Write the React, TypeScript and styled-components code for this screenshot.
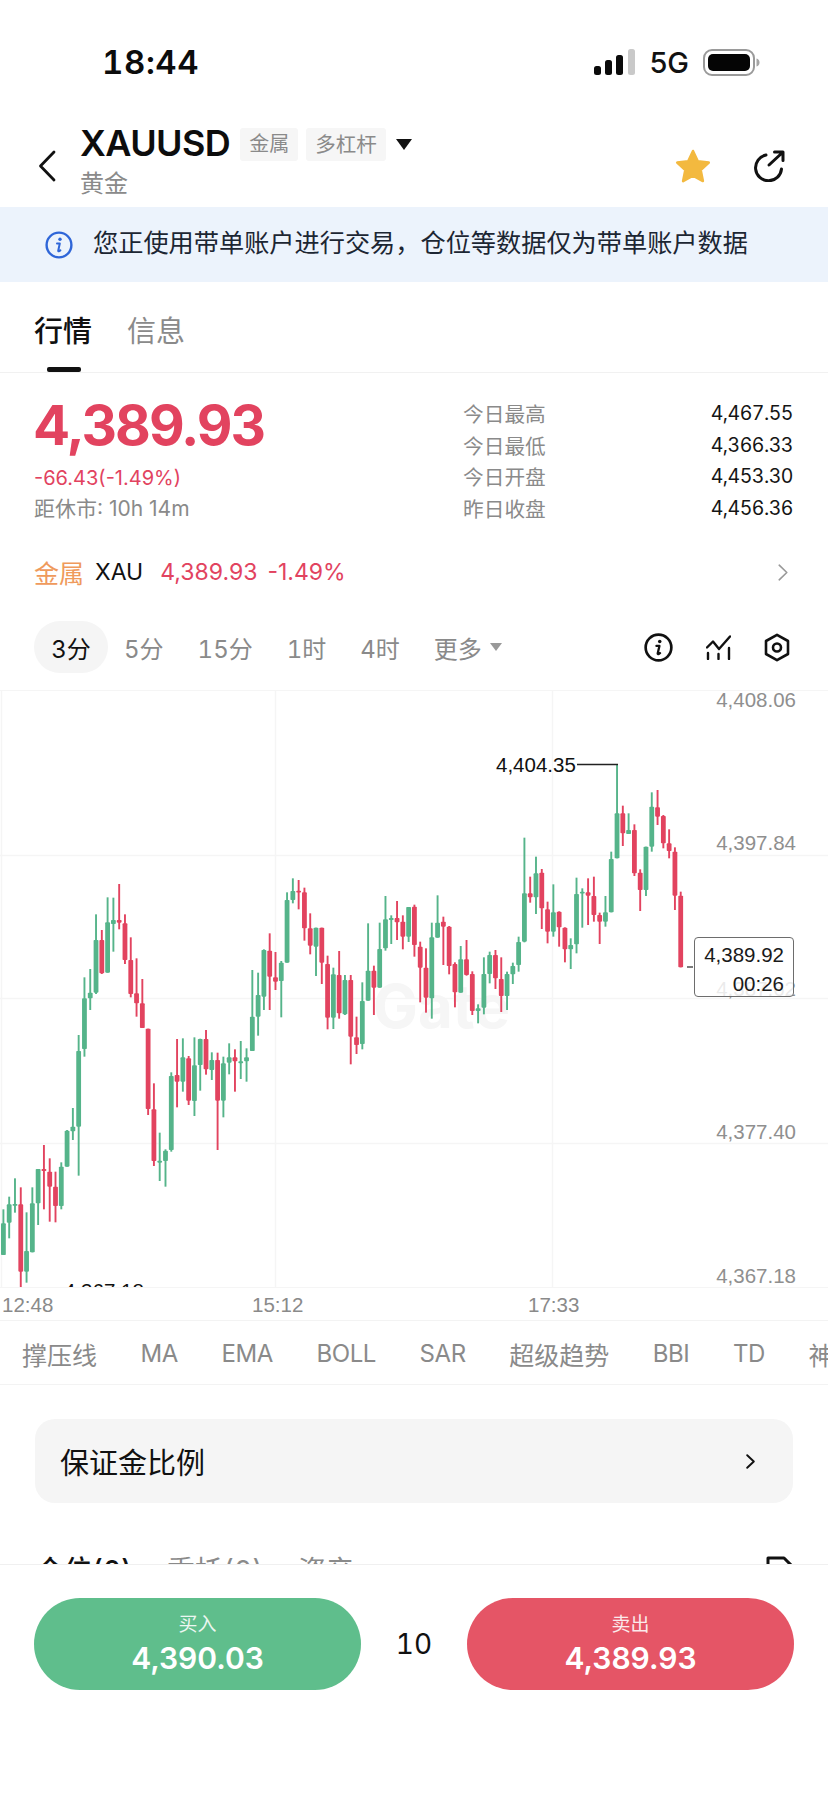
import React from "react";
import styled, { createGlobalStyle } from "styled-components";

const SANS = `Inter, "Noto Sans CJK SC", "Noto Sans", sans-serif`;
const CHART_FONT = `"Liberation Sans", "Noto Sans CJK SC", sans-serif`;
const RED = "#e2435f";
const GREEN = "#55b48a";
const GREY = "#8a8a8a";

const Global = createGlobalStyle`
  html, body { margin: 0; padding: 0; background: #fff; }
  body { font-family: ${SANS}; color: #111; }
  * { box-sizing: border-box; }
`;

/* ---------- candle data: [up?, wickTop, bodyTop, bodyBottom, wickBottom], crop px (3x) ---------- */
type Raw = [number, number, number, number, number];
const sectionA: Raw[] = [
  [1,1018,1060,1155,1155],[1,980,1003,1058,1105],[1,925,1002,1005,1028],[0,952,1003,1205,1255],[1,1027,1143,1205,1238],
  [1,952,1000,1147,1147],[1,897,897,1000,1065],[0,825,897,903,1018],[0,865,905,950,1055],[0,905,950,1008,1057],
  [1,877,890,1008,1018],[1,780,782,890,890],[1,714,770,784,810],[1,495,543,770,917],[1,322,385,537,560],
  [1,297,368,385,420],[1,133,210,368,372],[0,180,210,310,312],[1,82,157,308,308],[1,83,150,162,245],
  [0,42,150,158,178],[0,133,160,270,282],[0,202,270,372,382],[0,265,370,400,440],[0,327,400,474,474],
  [0,476,476,717,735],[0,640,718,873,888],[1,788,872,878,933],[1,838,842,873,950],[1,607,618,840,845],[0,507,615,635,712],
];
const sectionB: Raw[] = [
  [1,535,592,665,695],[0,588,595,722,735],[1,532,616,723,768],[1,536,537,615,692],[0,510,537,628,644],
  [1,577,600,630,660],[0,578,600,722,870],[1,590,610,722,772],[1,550,592,608,643],[0,568,592,604,695],
  [1,543,604,610,657],[1,565,592,604,665],[1,330,470,573,573],[1,338,405,470,527],[1,268,270,410,450],
  [0,220,272,350,450],[0,276,352,365,390],[1,303,308,363,472],[1,97,120,308,308],[1,55,93,120,130],
  [0,60,92,96,148],[0,83,97,205,242],[0,160,205,257,283],[1,203,203,260,348],[0,203,203,308,372],
  [0,287,312,473,508],[1,323,343,473,507],[0,273,345,460,476],[1,345,360,463,465],[0,345,360,530,613],[0,470,532,555,582],
];
const sectionC: Raw[] = [
  [1,427,483,612,628],[1,250,392,482,482],[0,377,392,443,525],[1,248,327,443,443],[1,168,238,325,332],
  [1,226,234,240,312],[0,183,234,247,300],[0,226,245,290,328],[1,201,201,290,306],[0,194,200,315,350],
  [0,305,320,383,487],[0,325,383,473,518],[1,248,292,475,536],[1,166,248,293,293],[0,230,245,260,375],
  [0,258,260,378,403],[0,367,372,457,502],[1,318,358,458,458],[0,300,358,405,407],[0,394,402,513,525],
  [1,493,505,513,550],[1,352,402,503,523],[1,335,345,402,430],[0,330,345,415,447],[0,352,417,468,516],
  [1,395,402,468,510],[1,368,378,403,432],[1,290,306,375,395],[1,-7,160,305,307],[0,110,160,172,188],[1,50,100,172,222],
];
const sectionD: Raw[] = [
  [0,357,368,475,537],[0,455,478,545,580],[1,403,487,545,560],[0,484,485,532,590],[0,532,533,598,637],
  [1,565,585,598,657],[1,383,432,583,610],[1,415,425,430,533],[0,385,427,437,525],[0,380,438,495,515],
  [0,488,495,515,582],[1,438,487,515,530],[1,305,327,487,487],[1,43,190,325,325],[0,167,190,250,288],
  [1,190,240,252,252],[0,223,240,370,378],[0,358,368,420,483],[1,290,290,420,438],[1,127,170,290,305],
  [0,120,172,200,225],[0,195,198,280,295],[0,238,280,303,325],[0,292,305,437,480],[0,425,437,652,652],
];
const CHART_TOP = 690;
const CHART_H = 597;
const toChart = (rows: Raw[], originY: number) =>
  rows.map(([u, a, b, c, d]) => ({
    up: !!u,
    wt: originY + a / 3 - CHART_TOP,
    bt: originY + b / 3 - CHART_TOP,
    bb: originY + c / 3 - CHART_TOP,
    wb: originY + d / 3 - CHART_TOP,
  }));
const candles = [
  ...toChart(sectionA, 870),
  ...toChart(sectionB, 860),
  ...toChart(sectionC, 840),
  ...toChart(sectionD, 750),
];

/* ---------- layout ---------- */
const Page = styled.div`
  width: 828px;
  height: 1796px;
  overflow: hidden;
  display: flex;
  flex-direction: column;
  background: #fff;
`;
const StatusBar = styled.div`
  height: 124px;
  flex: none;
  display: flex;
  align-items: center;
  justify-content: space-between;
  padding: 0 68px 0 102px;
`;
const Time = styled.div`
  font-size: 33px;
  font-weight: 600;
  letter-spacing: 0.6px;
  font-variant-numeric: tabular-nums;
  color: #0c0c0c;
`;
const StatusRight = styled.div`
  display: flex;
  align-items: center;
  gap: 14px;
`;
const FiveG = styled.div`
  font-size: 29px;
  font-weight: 500;
  color: #111;
`;
const Header = styled.div`
  height: 83px;
  flex: none;
  display: flex;
  align-items: flex-start;
  padding: 0 43px 0 38px;
`;
const BackBtn = styled.div`
  width: 42px;
  flex: none;
  margin-top: 26px;
  display: flex;
`;
const TitleBlock = styled.div`
  flex: 1;
  display: flex;
  flex-direction: column;
`;
const TitleRow = styled.div`
  display: flex;
  align-items: center;
  height: 33px;
  margin-top: 4px;
`;
const Symbol = styled.div`
  font-size: 36px;
  font-weight: 600;
  letter-spacing: -0.6px;
  color: #0d0d0d;
  margin: -2px 10px 0 0;
  line-height: 33px;
`;
const Tag = styled.div`
  height: 33px;
  line-height: 33px;
  padding: 0 9px;
  font-size: 20px;
  color: ${GREY};
  background: #f6f6f6;
  border-radius: 3px;
  margin-right: 8px;
`;
const TagWide = styled(Tag)`
  font-size: 20.5px;
`;
const Caret = styled.div`
  margin-left: 2px;
  width: 0;
  height: 0;
  border-left: 8px solid transparent;
  border-right: 8px solid transparent;
  border-top: 11px solid #111;
`;
const Subtitle = styled.div`
  font-size: 24px;
  line-height: 30px;
  margin-top: 8px;
  color: ${GREY};
`;
const HeaderIcons = styled.div`
  display: flex;
  align-items: center;
  gap: 41px;
  margin-top: 24px;
`;
const Banner = styled.div`
  height: 75px;
  flex: none;
  background: #ecf3fc;
  display: flex;
  align-items: center;
  gap: 20px;
  padding-left: 45px;
  font-size: 25.2px;
  color: #1c2633;
`;
const BannerText = styled.span`
  margin-bottom: 7px;
`;
const Tabs = styled.div`
  height: 91px;
  flex: none;
  display: flex;
  gap: 35px;
  padding: 30px 0 0 34px;
  border-bottom: 1px solid #f1f1f1;
`;
const Tab = styled.div<{ $active?: boolean }>`
  position: relative;
  font-size: 29px;
  line-height: 40px;
  font-weight: ${(p) => (p.$active ? 500 : 400)};
  color: ${(p) => (p.$active ? "#111" : GREY)};
  ${(p) =>
    p.$active
      ? `&::after { content: ""; position: absolute; left: 13px; top: 55px; width: 34px; height: 5px; border-radius: 2px; background: #111; }`
      : ""}
`;
const Quote = styled.div`
  height: 150px;
  flex: none;
  display: flex;
  justify-content: space-between;
  padding: 0 35px 0 33px;
`;
const QuoteLeft = styled.div`
  display: flex;
  flex-direction: column;
`;
const BigPrice = styled.div`
  font-size: 55px;
  font-weight: 700;
  line-height: 60px;
  margin-top: 22px;
  letter-spacing: -1.95px;
  color: ${RED};
`;
const Change = styled.div`
  font-size: 20px;
  line-height: 26px;
  margin: 10px 0 0 1px;
  color: ${RED};
`;
const Closing = styled.div`
  font-size: 21px;
  line-height: 26px;
  margin: 5px 0 0 1px;
  color: ${GREY};
`;
const Stats = styled.div`
  width: 330px;
  padding-top: 24px;
  display: grid;
  grid-template-columns: 1fr auto;
  grid-auto-rows: 31.7px;
  align-items: center;
`;
const StatLabel = styled.div`
  font-size: 20.7px;
  color: ${GREY};
`;
const StatValue = styled.div`
  font-size: 19.5px;
  letter-spacing: -0.5px;
  font-variant-numeric: tabular-nums;
  color: #151515;
  text-align: right;
`;
const MetalRow = styled.div`
  height: 60px;
  margin-top: 19px;
  flex: none;
  display: flex;
  align-items: center;
  padding: 0 40px 0 34px;
  font-size: 25px;
`;
const MetalTag = styled.span`
  color: #ef9a5c;
  margin-right: 11px;
`;
const MetalCode = styled.span`
  color: #111;
  margin-right: 17px;
  font-size: 23px;
`;
const MetalChange = styled.span`
  color: ${RED};
  font-size: 23px;
  margin-right: 10px;
`;
const Spacer = styled.div`
  flex: 1;
`;
const PeriodRow = styled.div`
  height: 52px;
  margin-top: 19px;
  flex: none;
  display: flex;
  align-items: center;
  gap: 34px;
  padding: 0 38px 0 34px;
  font-size: 24px;
  font-variant-numeric: tabular-nums;
  color: ${GREY};
`;
const Period = styled.div`
  color: ${GREY};
  white-space: nowrap;
`;
const ActivePeriod = styled.div`
  height: 52px;
  width: 74px;
  margin-right: -18px;
  border-radius: 26px;
  display: flex;
  align-items: center;
  justify-content: center;
  background: #f5f5f5;
  color: #111;
`;
const MoreCaret = styled.div`
  margin-left: -26px;
  width: 0;
  height: 0;
  border-left: 6px solid transparent;
  border-right: 6px solid transparent;
  border-top: 8px solid #999;
`;
const ToolIcons = styled.div`
  display: flex;
  align-items: center;
  gap: 33px;
`;
const Chart = styled.div`
  position: relative;
  flex: none;
  height: ${CHART_H}px;
  margin-top: 17px;
  overflow: hidden;
  border-top: 1px solid #f5f5f5;
`;
const ChartSvg = styled.svg`
  position: absolute;
  left: 0;
  top: -1px;
`;
const Watermark = styled.div`
  position: absolute;
  left: 373px;
  top: 280px;
  font-size: 60px;
  font-weight: 700;
  line-height: 70px;
  color: #f6f6f6;
`;
const AxisLabel = styled.div<{ $top: number }>`
  position: absolute;
  right: 32px;
  top: ${(p) => p.$top}px;
  font-family: ${CHART_FONT};
  font-size: 20.5px;
  line-height: 24px;
  color: #8f8f8f;
`;
const ExtremeLabel = styled.div<{ $left: number; $top: number }>`
  position: absolute;
  left: ${(p) => p.$left}px;
  top: ${(p) => p.$top}px;
  font-family: ${CHART_FONT};
  font-size: 20.5px;
  line-height: 24px;
  color: #111;
`;
const PriceBox = styled.div`
  position: absolute;
  left: 694px;
  top: 246px;
  width: 100px;
  height: 60px;
  border: 1px solid #6d6d6d;
  border-radius: 4px;
  background: rgba(255, 255, 255, 0.82);
  display: flex;
  flex-direction: column;
  align-items: flex-end;
  justify-content: center;
  padding: 3px 9px 0 0;
  font-family: ${CHART_FONT};
  font-size: 20.5px;
  line-height: 29px;
  color: #1a1a1a;
`;
const TimeAxis = styled.div`
  flex: none;
  height: 34px;
  position: relative;
  border-top: 1px solid #f5f5f5;
  border-bottom: 1px solid #f3f3f3;
`;
const TimeLabel = styled.div<{ $left: number }>`
  position: absolute;
  left: ${(p) => p.$left}px;
  top: 5px;
  font-family: ${CHART_FONT};
  font-size: 20.5px;
  line-height: 24px;
  color: ${GREY};
`;
const IndicatorBar = styled.div`
  flex: none;
  height: 64px;
  display: flex;
  align-items: center;
  gap: 43.5px;
  padding: 2px 0 0 22px;
  overflow: hidden;
  white-space: nowrap;
  color: ${GREY};
  border-bottom: 1px solid #f3f3f3;
`;
const IndicatorItem = styled.span<{ $cjk: boolean }>`
  font-size: ${(p) => (p.$cjk ? 25 : 24)}px;
  letter-spacing: ${(p) => (p.$cjk ? 0 : -0.4)}px;
`;
const MarginCard = styled.div`
  flex: none;
  height: 84px;
  margin: 34px 35px 0;
  padding: 0 38px 0 25px;
  border-radius: 20px;
  background: #f5f5f5;
  display: flex;
  align-items: center;
  justify-content: space-between;
  font-size: 29px;
  color: #111;
`;
const PositionTabs = styled.div`
  flex: 1;
  min-height: 0;
  overflow: hidden;
  display: flex;
  gap: 35px;
  padding: 53px 33px 0 36px;
  font-size: 28px;
  line-height: 30px;
  font-variant-numeric: tabular-nums;
  color: ${GREY};
`;
const PositionActive = styled.span`
  color: #111;
  font-weight: 500;
`;
const BottomBar = styled.div`
  flex: none;
  height: 232px;
  border-top: 1px solid #f0f0f0;
  display: flex;
  align-items: flex-start;
  justify-content: space-between;
  padding: 33px 34px 0 34px;
  background: #fff;
`;
const TradeBtn = styled.div<{ $buy?: boolean }>`
  width: 327px;
  height: 92px;
  border-radius: 46px;
  background: ${(p) => (p.$buy ? "#5fbe8c" : "#e55566")};
  color: #fff;
  display: flex;
  flex-direction: column;
  align-items: center;
  padding-top: 13px;
`;
const TradeLabel = styled.div`
  font-size: 19px;
  line-height: 27px;
  opacity: 0.88;
`;
const TradePrice = styled.div`
  font-size: 30px;
  font-weight: 600;
  line-height: 38px;
  margin-top: 1px;
`;
const Qty = styled.div`
  font-size: 28px;
  line-height: 92px;
  font-variant-numeric: tabular-nums;
  color: #111;
`;

/* ---------- icons ---------- */
const SignalIcon = () => (
  <svg width="41" height="26" viewBox="0 0 41 26">
    <rect x="0" y="17" width="7" height="9" rx="2.5" fill="#0b0b0b" />
    <rect x="11" y="11" width="7" height="15" rx="2.5" fill="#0b0b0b" />
    <rect x="22" y="6" width="7" height="20" rx="2.5" fill="#0b0b0b" />
    <rect x="34" y="0" width="7" height="26" rx="2.5" fill="#c9c9c9" />
  </svg>
);
const BatteryIcon = () => (
  <svg width="57" height="27" viewBox="0 0 57 27">
    <rect x="1" y="1" width="50" height="25" rx="8" fill="none" stroke="#9a9a9a" strokeWidth="2" />
    <rect x="5" y="5" width="42" height="17" rx="5" fill="#050505" />
    <path d="M53.5 9.5c2 .6 3 2 3 4s-1 3.4-3 4z" fill="#a5a5a5" />
  </svg>
);
const BackIcon = () => (
  <svg width="18" height="32" viewBox="0 0 18 32">
    <path d="M16 2 2.5 16 16 30" fill="none" stroke="#111" strokeWidth="2.8" strokeLinecap="round" strokeLinejoin="round" />
  </svg>
);
const StarIcon = () => (
  <svg width="36" height="35" viewBox="0 0 36 35">
    <path
      d="M18 3l4.8 10.2 11 1.3-8.1 7.6 2.2 11L18 27.6 8.1 33.1l2.2-11-8.1-7.6 11-1.3z"
      fill="#f3b93f"
      stroke="#f3b93f"
      strokeWidth="2.5"
      strokeLinejoin="round"
    />
  </svg>
);
const ShareIcon = () => (
  <svg width="33" height="32" viewBox="0 0 33 32">
    <path d="M14 5A13 13 0 1 0 29.5 19" fill="none" stroke="#111" strokeWidth="3" strokeLinecap="round" />
    <path d="M17 15 30.5 2.5M22.5 2h8.5v8.5" fill="none" stroke="#111" strokeWidth="3" strokeLinecap="round" strokeLinejoin="round" />
  </svg>
);
const InfoBlueIcon = () => (
  <svg width="28" height="28" viewBox="0 0 28 28">
    <circle cx="14" cy="14" r="12.4" fill="none" stroke="#2f66d8" strokeWidth="2.4" />
    <circle cx="15" cy="8.3" r="1.7" fill="#2f66d8" />
    <path d="M12 12.5h2.8l-1.6 7.2c-.1.6.4.8 1 .5l1.2-.8" fill="none" stroke="#2f66d8" strokeWidth="2" strokeLinecap="round" strokeLinejoin="round" />
  </svg>
);
const InfoBlackIcon = () => (
  <svg width="29" height="29" viewBox="0 0 28 28">
    <circle cx="14" cy="14" r="12.4" fill="none" stroke="#111" strokeWidth="2.6" />
    <circle cx="15.2" cy="8.2" r="1.7" fill="#111" />
    <path d="M12 12.5h2.9l-1.7 7.2c-.1.6.4.8 1 .5l1.3-.8" fill="none" stroke="#111" strokeWidth="2.2" strokeLinecap="round" strokeLinejoin="round" />
  </svg>
);
const IndicatorIcon = () => (
  <svg width="25" height="25" viewBox="0 0 25 25">
    <path d="M1 12.5l6-6 6 7.5L24 1.5" fill="none" stroke="#111" strokeWidth="2.4" strokeLinecap="round" strokeLinejoin="round" />
    <path d="M2 18v6M12.5 19v5M23 13v11" stroke="#111" strokeWidth="2.4" strokeLinecap="round" />
  </svg>
);
const HexIcon = () => (
  <svg width="26" height="29" viewBox="0 0 26 29">
    <path d="M13 1.8 24 8v13l-11 6.2L2 21V8z" fill="none" stroke="#111" strokeWidth="2.6" strokeLinejoin="round" />
    <circle cx="13" cy="14.5" r="4" fill="none" stroke="#111" strokeWidth="2.6" />
  </svg>
);
const Chevron = ({ color, w, h, sw }: { color: string; w: number; h: number; sw: number }) => (
  <svg width={w} height={h} viewBox={`0 0 ${w} ${h}`}>
    <path d={`M1.2 1.2 ${w - 1.2} ${h / 2} 1.2 ${h - 1.2}`} fill="none" stroke={color} strokeWidth={sw} strokeLinecap="round" strokeLinejoin="round" />
  </svg>
);
const DocIcon = () => (
  <svg width="29" height="32" viewBox="0 0 29 32">
    <path d="M2 30V2h16l9 9v19z" fill="none" stroke="#111" strokeWidth="3" strokeLinejoin="round" />
  </svg>
);

const CandleChart = () => (
  <ChartSvg width="828" height={CHART_H + 1} viewBox={`0 0 828 ${CHART_H + 1}`}>
    <path
      d="M0 165.5H828M0 308.5H828M0 453.5H828M275.5 0V597M552.5 0V597M1.5 0V597"
      stroke="#f5f5f5"
      strokeWidth="1.5"
      fill="none"
    />
    {candles.map((c, i) => {
      const x = 3.4 + 5.789 * i;
      const fill = c.up ? GREEN : RED;
      return (
        <g key={i} fill={fill}>
          <rect x={x - 0.95} y={c.wt} width="1.9" height={Math.max(c.wb - c.wt, 1)} />
          <rect x={x - 2.4} y={c.bt} width="4.8" height={Math.max(c.bb - c.bt, 1.8)} rx="0.8" />
        </g>
      );
    })}
    <path d="M577 74.5H618" stroke="#222" strokeWidth="1.4" />
    <path d="M687 277H693" stroke="#444" strokeWidth="1.4" />
  </ChartSvg>
);

const INDICATORS: [string, boolean][] = [
  ["撑压线", true],
  ["MA", false],
  ["EMA", false],
  ["BOLL", false],
  ["SAR", false],
  ["超级趋势", true],
  ["BBI", false],
  ["TD", false],
  ["神奇九转", true],
];

export default function App() {
  return (
    <Page>
      <Global />
      <StatusBar>
        <Time>18:44</Time>
        <StatusRight>
          <SignalIcon />
          <FiveG>5G</FiveG>
          <BatteryIcon />
        </StatusRight>
      </StatusBar>
      <Header>
        <BackBtn>
          <BackIcon />
        </BackBtn>
        <TitleBlock>
          <TitleRow>
            <Symbol>XAUUSD</Symbol>
            <Tag>金属</Tag>
            <TagWide>多杠杆</TagWide>
            <Caret />
          </TitleRow>
          <Subtitle>黄金</Subtitle>
        </TitleBlock>
        <HeaderIcons>
          <StarIcon />
          <ShareIcon />
        </HeaderIcons>
      </Header>
      <Banner>
        <InfoBlueIcon />
        <BannerText>您正使用带单账户进行交易，仓位等数据仅为带单账户数据</BannerText>
      </Banner>
      <Tabs>
        <Tab $active>行情</Tab>
        <Tab>信息</Tab>
      </Tabs>
      <Quote>
        <QuoteLeft>
          <BigPrice>4,389.93</BigPrice>
          <Change>-66.43(-1.49%)</Change>
          <Closing>距休市: 10h 14m</Closing>
        </QuoteLeft>
        <Stats>
          <StatLabel>今日最高</StatLabel>
          <StatValue>4,467.55</StatValue>
          <StatLabel>今日最低</StatLabel>
          <StatValue>4,366.33</StatValue>
          <StatLabel>今日开盘</StatLabel>
          <StatValue>4,453.30</StatValue>
          <StatLabel>昨日收盘</StatLabel>
          <StatValue>4,456.36</StatValue>
        </Stats>
      </Quote>
      <MetalRow>
        <MetalTag>金属</MetalTag>
        <MetalCode>XAU</MetalCode>
        <MetalChange>4,389.93</MetalChange>
        <MetalChange>-1.49%</MetalChange>
        <Spacer />
        <Chevron color="#999" w={10} h={17} sw={1.6} />
      </MetalRow>
      <PeriodRow>
        <ActivePeriod>3分</ActivePeriod>
        <Period>5分</Period>
        <Period>15分</Period>
        <Period>1时</Period>
        <Period>4时</Period>
        <Period>更多</Period>
        <MoreCaret />
        <Spacer />
        <ToolIcons>
          <InfoBlackIcon />
          <IndicatorIcon />
          <HexIcon />
        </ToolIcons>
      </PeriodRow>
      <Chart>
        <Watermark>Gate</Watermark>
        <CandleChart />
        <AxisLabel $top={-3}>4,408.06</AxisLabel>
        <AxisLabel $top={140}>4,397.84</AxisLabel>
        <AxisLabel $top={286}>4,387.62</AxisLabel>
        <AxisLabel $top={429}>4,377.40</AxisLabel>
        <AxisLabel $top={573}>4,367.18</AxisLabel>
        <ExtremeLabel $left={496} $top={62}>4,404.35</ExtremeLabel>
        <ExtremeLabel $left={64} $top={588}>4,367.18</ExtremeLabel>
        <PriceBox>
          <span>4,389.92</span>
          <span>00:26</span>
        </PriceBox>
      </Chart>
      <TimeAxis>
        <TimeLabel $left={2}>12:48</TimeLabel>
        <TimeLabel $left={252}>15:12</TimeLabel>
        <TimeLabel $left={528}>17:33</TimeLabel>
      </TimeAxis>
      <IndicatorBar>
        {INDICATORS.map(([t, cjk]) => (
          <IndicatorItem key={t} $cjk={cjk}>{t}</IndicatorItem>
        ))}
      </IndicatorBar>
      <MarginCard>
        <span>保证金比例</span>
        <Chevron color="#111" w={9} h={15} sw={1.9} />
      </MarginCard>
      <PositionTabs>
        <PositionActive>仓位(0)</PositionActive>
        <span>委托(0)</span>
        <span>资产</span>
        <Spacer />
        <DocIcon />
      </PositionTabs>
      <BottomBar>
        <TradeBtn $buy>
          <TradeLabel>买入</TradeLabel>
          <TradePrice>4,390.03</TradePrice>
        </TradeBtn>
        <Qty>10</Qty>
        <TradeBtn>
          <TradeLabel>卖出</TradeLabel>
          <TradePrice>4,389.93</TradePrice>
        </TradeBtn>
      </BottomBar>
    </Page>
  );
}
